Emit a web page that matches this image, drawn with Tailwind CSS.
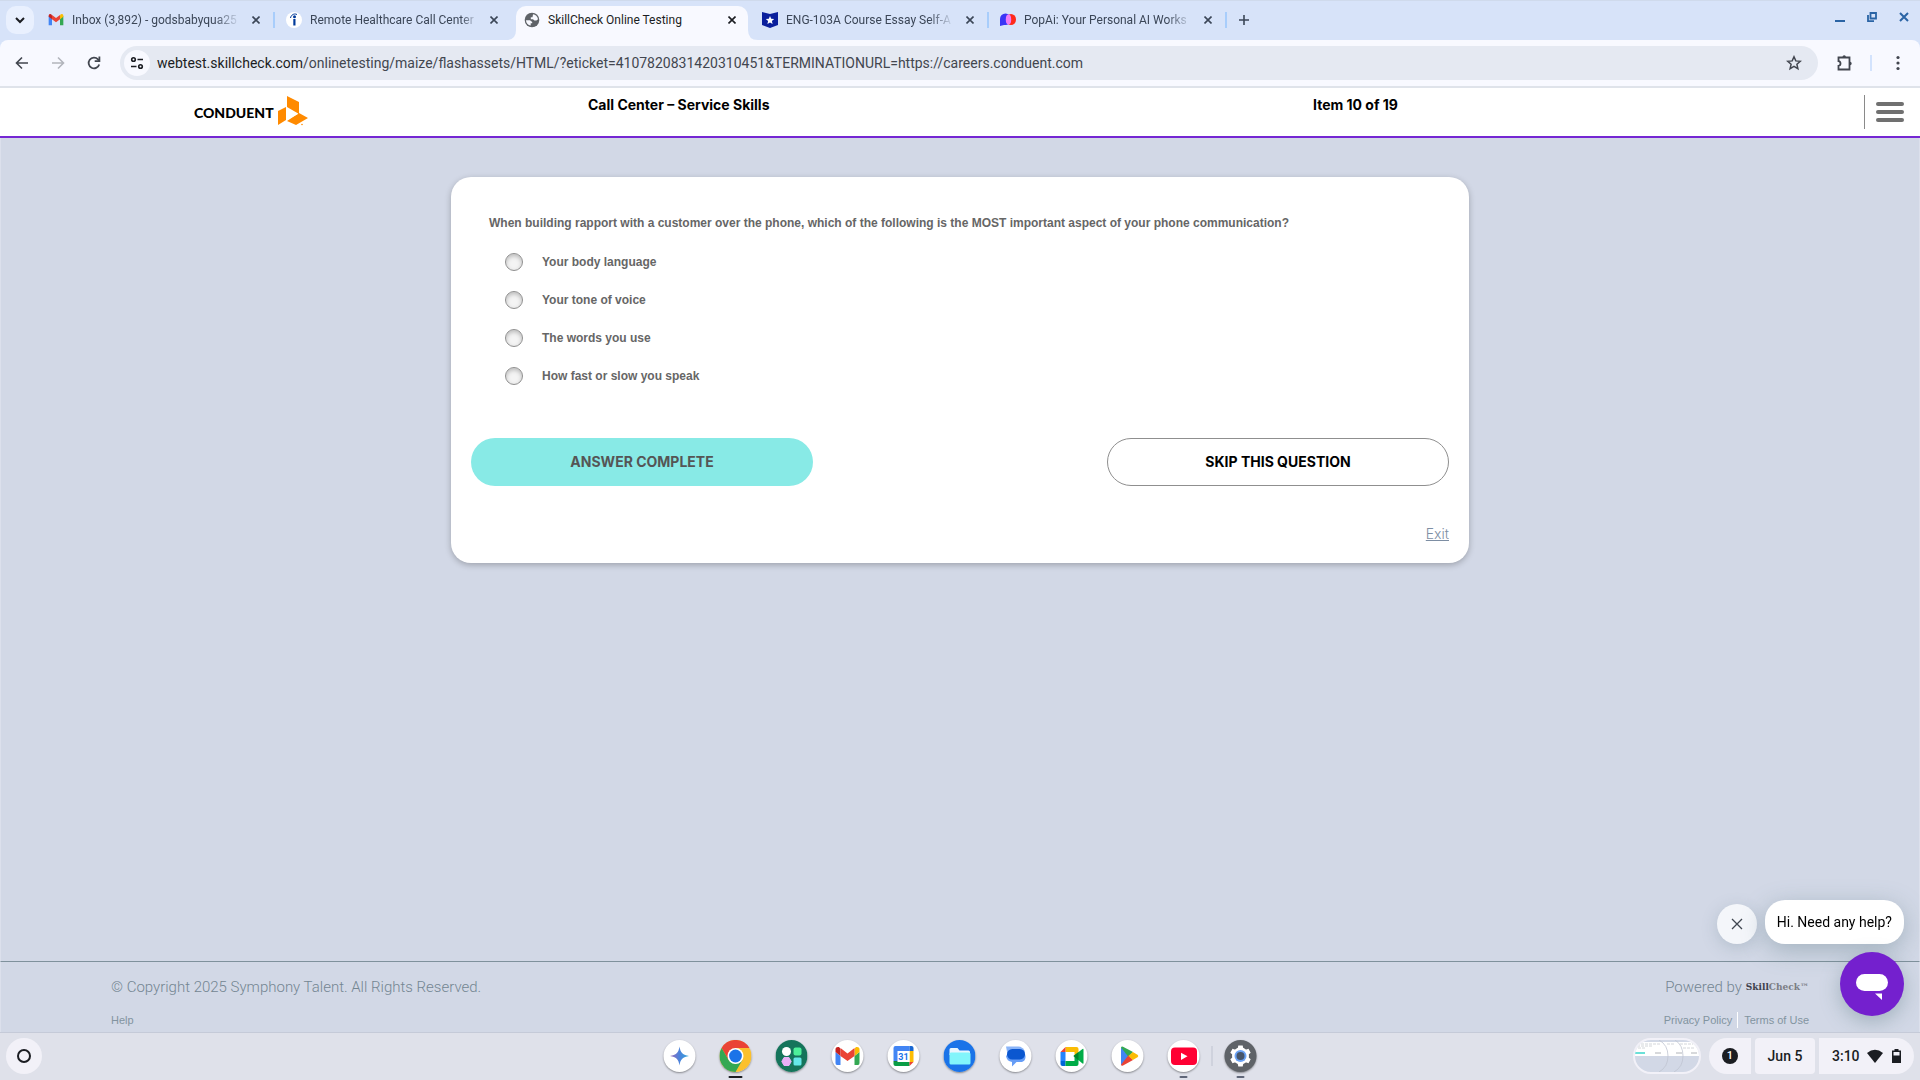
<!DOCTYPE html>
<html lang="en">
<head>
  <meta charset="UTF-8">
  <meta name="viewport" content="width=device-width, initial-scale=1.0">
  <title>SkillCheck Online Testing</title>
  <script src="https://cdn.jsdelivr.net/npm/@tailwindcss/browser@4"></script>
</head>
<body class="min-h-screen flex flex-col bg-[#d2d8e6] font-['Roboto',sans-serif] text-[#1b1d22] overflow-x-hidden">

  <!-- Tab strip -->
  <nav class="h-10 shrink-0 flex bg-[#d7e3f9] border-t border-[#cfdaec] text-xs text-[#3b4657]" aria-label="Tabs">
    <button class="mt-[5px] ml-[6px] mr-[3px] size-7 rounded-[10px] bg-[#e9f0fe] flex items-center justify-center text-[#1b1d22]" aria-label="Search tabs">
      <svg class="size-4" viewBox="0 0 16 16" fill="none" stroke="currentColor" stroke-width="2"><path d="M4 6l4 4 4-4"/></svg>
    </button>

    <div class="relative w-[238px] pl-[11px] pb-px flex items-center gap-2">
      <svg class="size-4 shrink-0" viewBox="0 0 24 24"><path fill="#4285f4" d="M1 20V6l5 4v10H2.500Q1 20 1 20z"/><path fill="#34a853" d="M23 20V6l-5 4v10h3.500Q23 20 23 20z"/><path fill="#fbbc04" d="M18 5v6l5-4V5.500C23 3 20 2.500 18.500 4z"/><path fill="#c5221f" d="M1 5.500V7l5 4V5l-.5-1C4 2.500 1 3 1 5.500z"/><path fill="#ea4335" d="M6 11V4.500l6 4.500 6-4.500V11l-6 4.500z"/></svg>
      <a href="#" class="w-[168px] whitespace-nowrap mask-r-from-85%">Inbox (3,892) - godsbabyqua25</a>
      <button class="size-4 flex items-center justify-center" aria-label="Close tab"><svg class="size-2" viewBox="0 0 8 8" stroke="currentColor" stroke-width="1.600"><path d="M0.500 0.500l7 7M7.500 0.500l-7 7"/></svg></button>
      <span class="absolute right-0 top-[11px] h-4 w-[2px] bg-[#a8cdfb]"></span>
    </div>

    <div class="w-[238px] pl-[11px] pb-px flex items-center gap-2">
      <svg class="size-4 shrink-0" viewBox="0 0 16 16"><circle cx="8" cy="8" r="8" fill="#fff"/><circle cx="8.500" cy="4.800" r="1.500" fill="#003a9b"/><path d="M7.300 7h2.200v6.500H7.300z" fill="#003a9b"/><path d="M4.500 6C5 3 8 1 11 2.500" fill="none" stroke="#003a9b" stroke-width="1"/></svg>
      <a href="#" class="w-[168px] whitespace-nowrap mask-r-from-90%">Remote Healthcare Call Center</a>
      <button class="size-4 flex items-center justify-center" aria-label="Close tab"><svg class="size-2" viewBox="0 0 8 8" stroke="currentColor" stroke-width="1.600"><path d="M0.500 0.500l7 7M7.500 0.500l-7 7"/></svg></button>
    </div>

    <!-- Active tab, with the flared bottom corners -->
    <div class="relative w-[232px] mx-[3px] mt-[5px] pl-2 pb-[6px] flex items-center gap-2 rounded-t-[10px] bg-[#f8f9ff] text-[#1b1d22]">
      <svg class="absolute -left-[10px] bottom-0 size-[10px]" viewBox="0 0 10 10"><path d="M10 0v10H0Q10 10 10 0z" fill="#f8f9ff"/></svg>
      <svg class="absolute -right-[10px] bottom-0 size-[10px]" viewBox="0 0 10 10"><path d="M0 0v10h10Q0 10 0 0z" fill="#f8f9ff"/></svg>
      <svg class="size-4 shrink-0" viewBox="0 0 16 16"><circle cx="8" cy="8" r="7.300" fill="#5f6368"/><path d="M2 8.300h4l2.200 1.700v1.300H6.700v2.300C4 13.200 2 11 2 8.300zM9 2.200c2.500.3 4.500 2.300 5 5l-1.600 1.300h-2L9 7.200H6.800V5.300h1.700z" fill="#f8f9ff"/></svg>
      <a href="#" class="w-[168px] whitespace-nowrap">SkillCheck Online Testing</a>
      <button class="size-4 flex items-center justify-center" aria-label="Close tab"><svg class="size-2" viewBox="0 0 8 8" stroke="currentColor" stroke-width="1.600"><path d="M0.500 0.500l7 7M7.500 0.500l-7 7"/></svg></button>
    </div>

    <div class="relative w-[238px] pl-[11px] pb-px flex items-center gap-2">
      <svg class="size-4 shrink-0" viewBox="0 0 16 16"><path d="M0 0l8 2 8-2v13l-8 3-8-3z" fill="#0a1f9c"/><path d="M8 4l1.200 2.800 3 .2-2.300 2 .7 3L8 10.400 5.400 12l.7-3-2.300-2 3-.2z" fill="#fff"/></svg>
      <a href="#" class="w-[168px] whitespace-nowrap mask-r-from-85%">ENG-103A Course Essay Self-A</a>
      <button class="size-4 flex items-center justify-center" aria-label="Close tab"><svg class="size-2" viewBox="0 0 8 8" stroke="currentColor" stroke-width="1.600"><path d="M0.500 0.500l7 7M7.500 0.500l-7 7"/></svg></button>
      <span class="absolute right-0 top-[11px] h-4 w-[2px] bg-[#a8cdfb]"></span>
    </div>

    <div class="relative w-[238px] pl-[11px] pb-px flex items-center gap-2">
      <svg class="size-4 shrink-0" viewBox="0 0 16 16"><path d="M0 14V7a5.500 5.500 0 0 1 11 0v1a5 5 0 0 1-5 5H4z" fill="#3a35f5"/><ellipse cx="11" cy="7.500" rx="5" ry="5.500" fill="#ff2a1a"/><ellipse cx="8.500" cy="7.500" rx="2.700" ry="5" fill="#f07cf5"/></svg>
      <a href="#" class="w-[168px] whitespace-nowrap mask-r-from-85%">PopAi: Your Personal AI Works</a>
      <button class="size-4 flex items-center justify-center" aria-label="Close tab"><svg class="size-2" viewBox="0 0 8 8" stroke="currentColor" stroke-width="1.600"><path d="M0.500 0.500l7 7M7.500 0.500l-7 7"/></svg></button>
      <span class="absolute right-0 top-[11px] h-4 w-[2px] bg-[#a8cdfb]"></span>
    </div>

    <button class="ml-px w-8 pb-px flex items-center justify-center" aria-label="New tab"><svg class="size-[10px]" viewBox="0 0 10 10" stroke="currentColor" stroke-width="1.600"><path d="M5 0v10M0 5h10"/></svg></button>

    <div class="ml-auto h-8 flex items-center text-[#2a64a5]">
      <button class="w-8 flex justify-center" aria-label="Minimize"><svg class="size-[10px]" viewBox="0 0 10 10"><path d="M0 8h10v2H0z" fill="currentColor"/></svg></button>
      <button class="w-8 flex justify-center" aria-label="Restore"><svg class="size-[10px]" viewBox="0 0 10 10" fill="none" stroke="currentColor" stroke-width="1.800"><path d="M3.500 1h5.500v5.500H3.500zM1 3v6.200h6"/></svg></button>
      <button class="w-8 flex justify-center" aria-label="Close window"><svg class="size-[10px]" viewBox="0 0 10 10" stroke="currentColor" stroke-width="2"><path d="M1 1l8 8M9 1L1 9"/></svg></button>
    </div>
  </nav>

  <!-- Toolbar -->
  <div class="bg-[#d7e3f9] shrink-0">
    <div class="h-12 flex items-center rounded-t-lg bg-[#f8f9ff] border-b-2 border-[#dfe3ea] pl-1 pr-[6px] text-[#42464f]">
      <button class="w-9 flex justify-center" aria-label="Back"><svg class="size-4" viewBox="0 0 16 16" fill="none" stroke="currentColor" stroke-width="1.600"><path d="M14 8H3M8 2.500L2.500 8 8 13.500"/></svg></button>
      <button class="w-9 flex justify-center text-[#b2b5bc]" aria-label="Forward"><svg class="size-4" viewBox="0 0 16 16" fill="none" stroke="currentColor" stroke-width="1.600"><path d="M2 8h11M8 2.500L13.500 8 8 13.500"/></svg></button>
      <button class="w-9 flex justify-center" aria-label="Reload"><svg class="size-4" viewBox="0 0 16 16" fill="none" stroke="currentColor" stroke-width="1.800"><path d="M13.200 9.500A5.400 5.400 0 1 1 12 4.300l1.300 1.400"/><path d="M13.400 1.500v4.700H8.700"/></svg></button>
      <div class="ml-2 h-[34px] flex-1 flex items-center rounded-full bg-[#e5e9f2] pl-1 pr-4">
        <button class="size-[26px] rounded-full bg-[#f8f9ff] flex items-center justify-center" aria-label="Site information">
          <svg class="size-4" viewBox="0 0 16 16" fill="none" stroke="#1b1d22" stroke-width="1.600"><circle cx="4.500" cy="4.500" r="1.800"/><path d="M8.500 4.500H14M2 11.500h5.500"/><circle cx="11.500" cy="11.500" r="1.800"/></svg>
        </button>
        <a href="#" class="ml-[7px] flex-1 text-[14px] whitespace-nowrap"><span class="text-[#1b1d22]">webtest.skillcheck.com</span>/onlinetesting/maize/flashassets/HTML/?eticket=4107820831420310451&amp;TERMINATIONURL=https://careers.conduent.com</a>
        <button aria-label="Bookmark"><svg class="size-4" viewBox="0 0 16 16" fill="none" stroke="currentColor" stroke-width="1.500"><path d="M8 1.800l1.800 4.100 4.500.4-3.400 3 1 4.400L8 11.400l-3.900 2.300 1-4.400-3.400-3 4.500-.4z"/></svg></button>
      </div>
      <button class="ml-[17px]" aria-label="Extensions"><svg class="size-[18px]" viewBox="0 0 18 18" fill="none" stroke="currentColor" stroke-width="1.800"><path d="M3.500 3.500h11v12h-11v-3.700q2-.3 2-2.300t-2-2.300z"/><path d="M7.500 3a1.700 1.700 0 0 1 3.400 0zM15 7.800a1.700 1.700 0 0 1 0 3.400z" fill="currentColor" stroke="none"/></svg></button>
      <span class="ml-[17px] w-[2px] h-4 bg-[#d3e3fd]"></span>
      <button class="ml-[18px] mr-2 w-4 flex justify-center" aria-label="Menu"><svg class="h-4 w-1" viewBox="0 0 4 16" fill="currentColor"><circle cx="2" cy="2.500" r="1.600"/><circle cx="2" cy="8" r="1.600"/><circle cx="2" cy="13.500" r="1.600"/></svg></button>
    </div>
  </div>

  <!-- Page header -->
  <header class="h-[50px] shrink-0 flex bg-white border-b-2 border-[#7527d3] pl-[194px] font-['Inter',sans-serif] text-black">
    <a href="#" class="w-[394px] flex items-center gap-1 pb-[3px]" aria-label="Conduent">
      <span class="font-['Lato',sans-serif] font-black text-[14px] leading-4 pt-1">CONDUENT</span>
      <svg class="w-[30px] h-[30px]" viewBox="0 0 30 30" fill="#ff8a00"><path d="M9 0l12 6v12L9 11zM0 15l8-4v13l-8 5zM21 17l9 5-12 7-9-4 9-6z"/><path d="M9 12l11 6-11 6z" fill="#fff"/><circle cx="24" cy="28.500" r=".8"/></svg>
    </a>
    <h1 class="w-[725px] pt-[7px] text-[14px] leading-5 font-bold">Call Center – Service Skills</h1>
    <p class="pt-[7px] text-[14px] leading-5 font-bold">Item 10 of 19</p>
    <div class="ml-auto my-[7px] mr-4 border-l border-[#8a8a8a] pl-[11px] flex items-center">
      <button class="flex flex-col gap-1" aria-label="Open menu">
        <span class="w-7 h-1 rounded-full bg-[#707070]"></span>
        <span class="w-7 h-1 rounded-full bg-[#707070]"></span>
        <span class="w-7 h-1 rounded-full bg-[#707070]"></span>
      </button>
    </div>
  </header>

  <main class="flex-1 border-x border-[#dce0ec] pt-[39px]">
    <form class="w-[1018px] mx-auto rounded-[20px] bg-white px-5 pt-9 pb-[19px] shadow-[0_2px_6px_rgba(0,0,0,0.25)]">
      <fieldset class="pl-[18px] font-['Liberation_Sans',sans-serif] font-bold text-xs text-[#666]">
        <legend class="leading-5">When building rapport with a customer over the phone, which of the following is the MOST important aspect of your phone communication?</legend>
        <div class="mt-5 pl-4 flex flex-col gap-5">
          <label class="flex items-center gap-[19px] h-[18px]">
            <input type="radio" name="answer" value="1" class="appearance-none size-[18px] rounded-full border border-[#8f8f8f] bg-[#f4f4f4] shadow-[inset_0_2px_4px_#bbb]">
            Your body language
          </label>
          <label class="flex items-center gap-[19px] h-[18px]">
            <input type="radio" name="answer" value="2" class="appearance-none size-[18px] rounded-full border border-[#8f8f8f] bg-[#f4f4f4] shadow-[inset_0_2px_4px_#bbb]">
            Your tone of voice
          </label>
          <label class="flex items-center gap-[19px] h-[18px]">
            <input type="radio" name="answer" value="3" class="appearance-none size-[18px] rounded-full border border-[#8f8f8f] bg-[#f4f4f4] shadow-[inset_0_2px_4px_#bbb]">
            The words you use
          </label>
          <label class="flex items-center gap-[19px] h-[18px]">
            <input type="radio" name="answer" value="4" class="appearance-none size-[18px] rounded-full border border-[#8f8f8f] bg-[#f4f4f4] shadow-[inset_0_2px_4px_#bbb]">
            How fast or slow you speak
          </label>
        </div>
      </fieldset>
      <div class="mt-[53px] flex justify-between font-['Inter',sans-serif] text-[14px] font-bold">
        <button type="button" class="w-[342px] h-12 pb-px rounded-full bg-[#88eae6] text-[#555]">ANSWER COMPLETE</button>
        <button type="button" class="w-[342px] h-12 pb-px rounded-full border border-[#8f8f8f] bg-white text-black">SKIP THIS QUESTION</button>
      </div>
      <div class="mt-[38px] flex justify-end">
        <a href="#" class="font-['Inter',sans-serif] font-light text-[14px] leading-5 underline text-[#7d8ea3]">Exit</a>
      </div>
    </form>
  </main>

  <footer class="h-[71px] shrink-0 border-x border-x-[#dce0ec] border-t border-t-[#7f919c] px-[110px] pt-[15px] flex justify-between text-[#748692] font-light text-[15px] leading-5">
    <div>
      <p>© Copyright 2025 Symphony Talent. All Rights Reserved.</p>
      <a href="#" class="mt-[15px] block w-fit font-['Liberation_Sans',sans-serif] font-normal text-[11px] leading-4 text-[#8294a0]">Help</a>
    </div>
    <div class="flex flex-col items-end">
      <p class="flex items-center gap-1">Powered by <span class="font-['DejaVu_Serif',serif] font-bold text-[9px] text-[#7b7d84]"><span class="text-[#3f424d]">Skill</span>Check™</span></p>
      <p class="mt-[15px] flex font-['Liberation_Sans',sans-serif] font-normal text-[11px] leading-4 text-[#8294a0]">
        <a href="#" class="pr-[5px] border-r border-white">Privacy Policy</a>
        <a href="#" class="pl-[6px]">Terms of Use</a>
      </p>
    </div>
  </footer>

  <!-- Chat launcher -->
  <aside class="fixed right-4 bottom-16 flex flex-col items-end gap-2">
    <div class="flex items-center gap-2">
      <button class="mt-1 size-10 rounded-full bg-[#f4f6fa] flex items-center justify-center shadow-[0_4px_16px_rgba(90,120,130,0.25)]" aria-label="Dismiss message"><svg class="size-3" viewBox="0 0 12 12" stroke="#3f4650" stroke-width="1.300"><path d="M1 1l10 10M11 1L1 11"/></svg></button>
      <p class="h-11 px-3 flex items-center rounded-[20px] bg-white text-black text-[14px] whitespace-nowrap shadow-[0_6px_24px_rgba(90,120,130,0.4)]">Hi. Need any help?</p>
    </div>
    <button class="size-16 rounded-full bg-[#7420ce] flex items-center justify-center shadow-[0_6px_20px_rgba(90,120,130,0.4)]" aria-label="Open chat">
      <svg class="size-8" viewBox="0 0 32 32" fill="#fff"><rect y="6" width="32" height="17" rx="8.500"/><path d="M19 25.500h7V32z"/></svg>
    </button>
  </aside>

  <!-- Shelf -->
  <div class="relative h-12 shrink-0 flex items-center justify-between bg-[#dfe1ea] shadow-[inset_0_1px_#c5cad8] px-[6px]">
    <button class="size-9 rounded-full bg-[#f2f1f8] flex items-center justify-center" aria-label="Launcher"><span class="size-[14px] rounded-full border-2 border-[#1b1d22]"></span></button>

    <div class="absolute left-1/2 -translate-x-1/2 top-0 h-full flex items-center gap-6">
      <button class="size-8 rounded-full bg-white shadow-[0_1px_2px_rgba(0,0,0,0.4)]" aria-label="Gemini"><svg class="size-8" viewBox="0 0 32 32"><defs><linearGradient id="gem" x1="0" x2="1"><stop offset="0" stop-color="#9b6bb8"/><stop offset=".5" stop-color="#4b83dc"/><stop offset="1" stop-color="#35a6d8"/></linearGradient></defs><path d="M16 6.500c.8 6 3.500 8.700 9.500 9.500-6 .8-8.700 3.500-9.500 9.500-.8-6-3.500-8.700-9.500-9.500 6-.8 8.700-3.500 9.500-9.500z" fill="url(#gem)"/></svg></button>
      <button class="relative size-8 rounded-full shadow-[0_1px_2px_rgba(0,0,0,0.4)]" aria-label="Chrome"><svg class="size-8" viewBox="0 0 32 32"><circle cx="16" cy="16" r="16" fill="#fbc02d"/><path d="M16 8h13.900A16 16 0 0 0 2.140 8L9.070 20z" fill="#ea4335"/><path d="M2.140 8A16 16 0 0 0 16 32l6.930-12L16 24 9.070 20z" fill="#34a853"/><circle cx="16" cy="16" r="8" fill="#fff"/><circle cx="16" cy="16" r="6.400" fill="#1a73e8"/></svg><span class="absolute left-[9px] -bottom-[6px] w-[14px] h-[2px] rounded-full bg-[#1b1d22]"></span></button>
      <button class="size-8 rounded-full shadow-[0_1px_2px_rgba(0,0,0,0.4)]" aria-label="Apps"><svg class="size-8" viewBox="0 0 32 32"><circle cx="16" cy="16" r="16" fill="#15745b"/><circle cx="11" cy="11.500" r="4.500" fill="#fff"/><rect x="18" y="7.500" width="8" height="8" rx="2" fill="#4df09a"/><path d="M8.500 17.500h5l2.200 4-2.200 4h-5l-2.200-4z" fill="#e8b0f7" stroke="#e8b0f7" stroke-linejoin="round"/><rect x="18" y="17.500" width="8" height="8" rx="1.500" fill="#65e8ea"/></svg></button>
      <button class="size-8 rounded-full bg-white shadow-[0_1px_2px_rgba(0,0,0,0.4)]" aria-label="Gmail"><svg class="size-8" viewBox="0 0 32 32"><path fill="#4285f4" d="M4 12l5 4v9H5.500Q4 25 4 23z"/><path fill="#34a853" d="M28 12l-5 4v9h3.500Q28 25 28 23z"/><path fill="#fbbc04" d="M23 9v7l5-4v-2.500c0-2.500-2.500-3-4-2z"/><path fill="#c5221f" d="M4 12V9.500c0-2.500 2.500-3 4-2L9 9v7z"/><path fill="#ea4335" d="M9 16V8l7 5.500L23 8v8l-7 5z"/></svg></button>
      <button class="size-8 rounded-full bg-white shadow-[0_1px_2px_rgba(0,0,0,0.4)]" aria-label="Calendar"><svg class="size-8" viewBox="0 0 32 32"><path d="M6 8q0-2 2-2h14v5H11v10H6z" fill="#4285f4"/><path d="M22 6h2q2 0 2 2v3h-4z" fill="#1967d2"/><path d="M22 11h4v11h-4z" fill="#fbbc04"/><path d="M6 22h16v4H8q-2 0-2-2z" fill="#0a9d46"/><path d="M6 21h5v1H6z" fill="#188038"/><path d="M22 22h4l-4 4z" fill="#ea4335"/><path d="M10 11h12v11H10z" fill="#fff"/><text x="16" y="19.500" text-anchor="middle" font-size="9" font-weight="700" fill="#1a73e8">31</text></svg></button>
      <button class="size-8 rounded-full shadow-[0_1px_2px_rgba(0,0,0,0.4)]" aria-label="Files"><svg class="size-8" viewBox="0 0 32 32"><circle cx="16" cy="16" r="16" fill="#1a73e8"/><path d="M6 9.500Q6 8 7.500 8H14l2 2.500h9q1.500 0 1.500 1.500v3H6z" fill="#e8f6ff"/><rect x="6" y="12.500" width="21" height="12" rx="1.500" fill="#82f5fb"/></svg></button>
      <button class="size-8 rounded-full bg-white shadow-[0_1px_2px_rgba(0,0,0,0.4)]" aria-label="Messages"><svg class="size-8" viewBox="0 0 32 32"><path d="M6.500 6.500H19a6.500 6.500 0 0 1 0 13H9z" fill="#8ab4f8"/><path d="M10.500 12H22a4.500 4.500 0 0 1 4 5c0 3-2 5-5 5h-4l-4.500 4.500V22A7 7 0 0 1 6.500 16z" fill="#669df6"/><rect x="7.500" y="9" width="18" height="10.500" rx="5.250" fill="#0b57d0"/></svg></button>
      <button class="size-8 rounded-full bg-white shadow-[0_1px_2px_rgba(0,0,0,0.4)]" aria-label="Meet"><svg class="size-8" viewBox="0 0 32 32"><path d="M10 7h11q2 0 2 2v7h-4v-4h-9z" fill="#fbbc04"/><path d="M5 12l5-5v5z" fill="#ea4335"/><path d="M5 12h5v9H5z" fill="#2684fc"/><path d="M5 21h5v5H7q-2 0-2-2z" fill="#0066da"/><path d="M10 21h9v-4h4v7q0 2-2 2H10z" fill="#00ac47"/><path d="M18 16l9-7q1-.7 1 .5v13.500q0 1-1 .5z" fill="#00ac47"/><path d="M18 16l5-4v8.500z" fill="#00832d"/></svg></button>
      <button class="size-8 rounded-full bg-white shadow-[0_1px_2px_rgba(0,0,0,0.4)]" aria-label="Play Store"><svg class="size-8" viewBox="0 0 32 32"><path d="M9.500 7v18.500l9-9.300z" fill="#4285f4"/><path d="M9.500 7.500q.5-1.500 2-.8L21.500 12l-4.500 5z" fill="#34a853"/><path d="M9.500 24.800q.5 1.500 2 .8L21.500 20 17 15.300z" fill="#ea4335"/><path d="M21.300 11.900l4.700 2.800q1.700 1.300 0 2.600l-4.700 2.800-4.300-4z" fill="#fbbc04"/></svg></button>
      <button class="relative size-8 rounded-full bg-white shadow-[0_1px_2px_rgba(0,0,0,0.4)]" aria-label="YouTube"><svg class="size-8" viewBox="0 0 32 32"><rect x="3.500" y="7.500" width="26" height="17.500" rx="4" fill="#ff0033"/><path d="M13.500 12.700v7.200l6.500-3.600z" fill="#fff"/></svg><span class="absolute left-3 -bottom-[6px] w-2 h-[2px] rounded-full bg-[#5f6678]"></span></button>
      <span class="-mx-3 w-px h-5 bg-[#bfc3cf]"></span>
      <button class="relative size-8 rounded-full bg-[#5f6368] shadow-[0_1px_2px_rgba(0,0,0,0.4)]" aria-label="Settings"><svg class="size-8" viewBox="0 0 32 32"><g fill="#fff"><circle cx="16" cy="16" r="8.500"/><path id="tooth" d="M13.800 5.500h4.400l1 5h-6.400zM13.800 26.500h4.400l1-5h-6.400z"/><use href="#tooth" transform="rotate(60 16 16)"/><use href="#tooth" transform="rotate(120 16 16)"/></g><circle cx="16" cy="16" r="6" fill="#6ba3f5"/><circle cx="16" cy="16" r="4" fill="#47566b"/></svg><span class="absolute left-3 -bottom-[6px] w-2 h-[2px] rounded-full bg-[#5f6678]"></span></button>
    </div>

    <div class="h-9 flex items-stretch gap-1 text-[14px] font-medium">
      <button class="mr-1 w-[68px] rounded-full overflow-hidden border-2 border-[#f2f1f8] bg-[#d2d8e6]" aria-label="Recent captures">
        <svg class="w-full h-full" viewBox="0 0 64 32"><path d="M0 2h64v14H0z" fill="#fff"/><path d="M2 4h24M2 6h16M32 4h7M45 4h13M48 8h11M3 8h7" stroke="#c8cbd0" stroke-width=".8" stroke-dasharray="3 1"/><path d="M0 12h10v2H0z" fill="#6be0d8"/><path d="M20 13h6M41 13h6M56 13h6" stroke="#b0b3b8" stroke-width="1"/><path d="M24 0q9 5 9 16t-9 16M40 0q8 5 8 16t-9 16" fill="none" stroke="#c0c5d2" stroke-width=".8"/></svg>
      </button>
      <button class="w-[42px] rounded-l-full rounded-r bg-[#f2f1f8] flex items-center justify-center" aria-label="Notifications"><span class="size-4 rounded-full bg-[#1b1d22] text-white text-[11px] leading-4">1</span></button>
      <button class="w-[60px] rounded bg-[#f2f1f8]">Jun 5</button>
      <button class="w-[95px] rounded-l rounded-r-full bg-[#f2f1f8] flex items-center pl-[13px]">
        3:10
        <svg class="ml-[7px] size-4" viewBox="0 0 16 16" fill="currentColor"><path d="M0 5q8-6.500 16 0L8 15z"/></svg>
        <svg class="ml-[9px] w-[9px] h-[14px]" viewBox="0 0 9 14"><path d="M2.500 0h4v1.500H9V14H0V1.500h2.500z" fill="currentColor"/><path d="M1.500 3h6v3.500h-6z" fill="#f2f1f8"/></svg>
      </button>
    </div>
  </div>
</body>
</html>
